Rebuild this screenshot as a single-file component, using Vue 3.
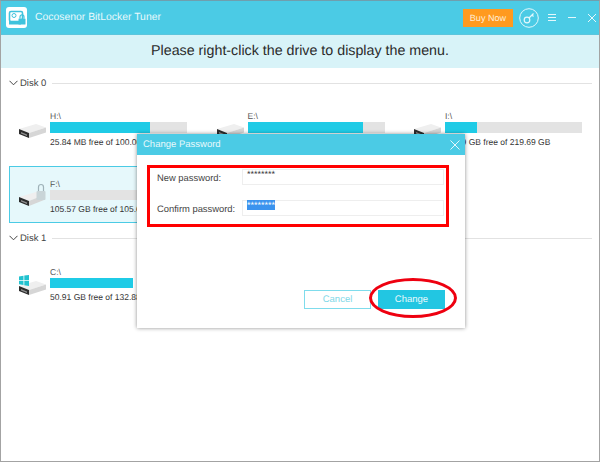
<script setup>
const drives = [
  { id: 'h', label: 'H:\\', used: 73, text: '25.84 MB free of 100.00 MB' },
  { id: 'e', label: 'E:\\', used: 84, text: '17.05 GB free of 107.39 GB' },
  { id: 'i', label: 'I:\\', used: 23, text: '69.69 GB free of 219.69 GB' },
]
</script>

<template>
  <div class="window">
    <header class="titlebar">
      <div class="logo">
        <svg width="20" height="20" viewBox="0 0 20 20">
          <rect x="2.500" y="3.500" width="13" height="10" rx="1.500" fill="none" stroke="#3fc3dd" stroke-width="1.600" />
          <circle cx="7" cy="7.500" r="2" fill="none" stroke="#3fc3dd" stroke-width="1" />
          <rect x="2" y="13" width="12" height="3.500" fill="#3fc3dd" />
          <path d="M13 10.500v-1.600a2 2 0 0 1 4 0v1.600" fill="none" stroke="#3fc3dd" stroke-width="1.200" />
          <rect x="11.500" y="10.500" width="7" height="6" rx="0.600" fill="#3fc3dd" />
        </svg>
      </div>
      <span class="app-name">Cocosenor BitLocker Tuner</span>
      <button class="buy">Buy Now</button>
      <svg class="key" width="20" height="20" viewBox="0 0 20 20" fill="none" stroke="#e4f8fc">
        <circle cx="10" cy="10" r="9.300" />
        <circle cx="8" cy="12" r="2.800" stroke-width="1.200" />
        <path d="M10 10l4.500-4.500M13 7l1.500 1.500" stroke-width="1.200" />
      </svg>
      <svg class="ctl menu" width="10" height="10" viewBox="0 0 10 10" stroke="#e4f8fc">
        <path d="M1 1.500h8M1 4.500h8M1 7.500h8" />
      </svg>
      <svg class="ctl" width="10" height="10" viewBox="0 0 10 10" stroke="#e4f8fc">
        <path d="M1 4.500h8" />
      </svg>
      <svg class="ctl" width="10" height="10" viewBox="0 0 10 10" stroke="#e4f8fc">
        <path d="M1 1l8 8M9 1l-8 8" />
      </svg>
    </header>

    <div class="hint">Please right-click the drive to display the menu.</div>

    <main class="content">
      <section class="disk">
        <h2 class="disk-title">
          <svg width="9" height="6" viewBox="0 0 9 6" fill="none" stroke="#444"><path d="M.5.8l4 4 4-4" /></svg>
          <span>Disk 0</span>
          <i class="rule"></i>
        </h2>
        <div class="drives">
          <div v-for="d in drives" :key="d.id" class="drive">
            <svg class="hdd" width="27" height="14" viewBox="0 0 27 14">
              <path d="M0 5L17 0l10 3.500L10 9z" fill="#efefef" />
              <path d="M10 9l17-5.500v5L10 14z" fill="#d6d6d6" />
              <path d="M0 5l10 4v5L0 10z" fill="#2c2c2c" />
              <path d="M2 8l6 2.400v1.600L2 9.600z" fill="#8d8d8d" />
            </svg>
            <div class="info">
              <div class="name">{{ d.label }}</div>
              <div class="bar"><div class="fill" :style="{ width: d.used + '%' }"></div></div>
              <div class="free">{{ d.text }}</div>
            </div>
          </div>
        </div>
        <div class="drive selected">
          <svg class="hdd" width="27" height="24" viewBox="0 0 27 24">
            <path d="M0 14l17-5 8 3-15 6z" fill="#efefef" />
            <path d="M10 18l15-6v5l-15 6z" fill="#d6d6d6" />
            <path d="M0 14l10 4v5L0 19z" fill="#2c2c2c" />
            <path d="M2 17l6 2.400V21L2 18.600z" fill="#8d8d8d" />
            <path d="M19.500 8V4a2.500 2.500 0 0 1 5 0v4" fill="none" stroke="#9fb2b8" stroke-width="1.200" />
            <rect x="17.500" y="8" width="9" height="9" rx="1" fill="#c9d5d8" />
          </svg>
          <div class="info">
            <div class="name">F:\</div>
            <div class="bar"></div>
            <div class="free">105.57 GB free of 105.67 GB</div>
          </div>
        </div>
      </section>

      <section class="disk second">
        <h2 class="disk-title">
          <svg width="9" height="6" viewBox="0 0 9 6" fill="none" stroke="#444"><path d="M.5.8l4 4 4-4" /></svg>
          <span>Disk 1</span>
          <i class="rule"></i>
        </h2>
        <div class="drive system">
          <svg class="hdd" width="27" height="20" viewBox="0 0 27 20">
            <path d="M0 11l17-5 10 3.500L10 15z" fill="#efefef" />
            <path d="M10 15l17-5.500v5L10 20z" fill="#d6d6d6" />
            <path d="M0 11l10 4v5L0 16z" fill="#2c2c2c" />
            <path d="M2 14l6 2.400V18L2 15.600z" fill="#8d8d8d" />
            <path d="M0 1.500l4.500-.8v4.300H0zM5.300.6L10 0v5H5.300zM0 5.800h4.500v4.300L0 9.300zM5.300 5.800H10V11l-4.700-.8z" fill="#22c2cf" />
          </svg>
          <div class="info">
            <div class="name">C:\</div>
            <div class="bar bare"><div class="fill" style="width: 83px"></div></div>
            <div class="free">50.91 GB free of 132.88 GB</div>
          </div>
        </div>
      </section>
    </main>

    <div class="dialog">
      <div class="dialog-head">
        <span>Change Password</span>
        <svg width="10" height="10" viewBox="0 0 10 10" stroke="#e4f8fc" fill="none"><path d="M.5.5l9 9M9.500.5l-9 9" /></svg>
      </div>
      <div class="dialog-body">
        <form class="fields">
          <label class="field">
            <span>New password:</span>
            <div class="input">********</div>
          </label>
          <label class="field">
            <span>Confirm password:</span>
            <div class="input"><b>********</b></div>
          </label>
        </form>
        <div class="actions">
          <button type="button" class="cancel">Cancel</button>
          <button type="button" class="change">Change</button>
        </div>
      </div>
    </div>
  </div>
</template>

<style>
html, body { margin: 0; background: #fff; }
</style>

<style scoped>
.window {
  position: relative;
  box-sizing: border-box;
  width: 600px;
  height: 462px;
  border: 1px solid #a3a3a3;
  border-top-color: #6f9fae;
  background: #fff;
  font-family: "Liberation Sans", Arial, sans-serif;
  text-rendering: geometricPrecision;
  overflow: hidden;
  display: flex;
  flex-direction: column;
}
.titlebar {
  flex: none;
  height: 33px;
  background: #4bcbe5;
  display: flex;
  align-items: center;
  padding: 0 2px 0 5px;
  border-bottom: 1px solid #5cc5dc;
}
.logo {
  width: 21px;
  height: 21px;
  background: #fff;
  border-radius: 3px;
  display: flex;
  align-items: center;
  justify-content: center;
}
.app-name { margin-left: 8px; color: #e8f9fc; font-size: 10.400px; flex: 1; }
.buy {
  width: 50px;
  height: 18px;
  padding: 0;
  border: 0;
  background: #ff9a1f;
  color: #fdeeda;
  font: 9.100px "Liberation Sans", Arial, sans-serif;
  text-rendering: geometricPrecision;
}
.key { margin-left: 6px; }
.ctl { margin-left: 10px; }
.menu { margin-left: 8px; }
.hint {
  flex: none;
  height: 33px;
  line-height: 32px;
  background: #d8f3f8;
  text-align: center;
  font-size: 14.250px;
  color: #2b2b2b;
}
.content { flex: 1; padding: 8px 7px 0 8px; }
.disk-title {
  margin: 0;
  height: 14px;
  display: flex;
  align-items: center;
  font-size: 9.500px;
  font-weight: 400;
  color: #444;
  gap: 2px;
}
.rule { flex: 1; height: 1px; background: #e2e2e2; margin-left: 4px; }
.drives { display: flex; gap: 19.500px; margin-top: 21px; }
.drive { display: flex; align-items: center; flex: none; }
.hdd { flex: none; margin: 3px 0 0 10px; }
.info { margin-left: 4px; color: #333; font-size: 8.500px; }
.name { height: 11px; line-height: 11px; font-size: 8.500px; color: #555; }
.bar { height: 11px; width: 137px; background: #e3e3e3; }
.fill { height: 100%; background: #1fcbe6; }
.free { margin-top: 4px; line-height: 10px; white-space: nowrap; }
.selected {
  box-sizing: border-box;
  width: 178px;
  height: 57px;
  margin-top: 19px;
  border: 1px solid #4bcbe5;
  background: #e6f8fb;
}
.selected .hdd { margin: 0 0 0 9px; }
.selected .info { margin-top: 3px; }
.selected .bar { height: 10px; }
.second { margin-top: 8px; }
.system { margin-top: 22px; }
.system .hdd { margin: 0 0 0 10px; }
.bare { background: transparent; height: 10px; }

.dialog {
  position: absolute;
  left: 136px;
  top: 133px;
  width: 328px;
  height: 194px;
  background: #fff;
  box-shadow: 0 0 4px rgba(0, 0, 0, .45);
  display: flex;
  flex-direction: column;
}
.dialog-head {
  flex: none;
  height: 21px;
  background: #4bcbe5;
  color: #e8f9fc;
  font-size: 9.500px;
  display: flex;
  align-items: center;
  justify-content: space-between;
  padding: 0 5px 0 6px;
}
.dialog-body { flex: 1; position: relative; }
.fields {
  box-sizing: border-box;
  position: absolute;
  left: 10px;
  top: 10px;
  width: 302px;
  height: 62px;
  border: 3px solid #f00;
  display: flex;
  flex-direction: column;
  gap: 13px;
}
.field { display: flex; align-items: center; height: 18px; font-size: 9.400px; color: #444; }
.field span { width: 85px; margin-left: 7px; }
.input {
  box-sizing: border-box;
  width: 202px;
  height: 16px;
  border: 1px solid #eee;
  padding-left: 4px;
  font-size: 9px;
  line-height: 9px;
  color: #333;
}
.input b { font-weight: 400; background: #3b93ee; color: #fff; }
.actions {
  position: absolute;
  left: 167px;
  top: 135px;
  display: flex;
  gap: 7px;
}
.actions button {
  box-sizing: border-box;
  width: 67px;
  height: 19px;
  padding: 0;
  font: 9.500px "Liberation Sans", Arial, sans-serif;
  text-rendering: geometricPrecision;
}
.cancel { background: #fff; border: 1px solid #7fdcec; color: #80d8e8; }
.change { background: #22c6e2; border: 0; color: #e8f9fc; }
.change::after {
  content: "";
  position: absolute;
  left: 65px;
  top: -12px;
  width: 88px;
  height: 40px;
  box-sizing: border-box;
  border: 3px solid #ee0010;
  border-radius: 50%;
}
</style>
